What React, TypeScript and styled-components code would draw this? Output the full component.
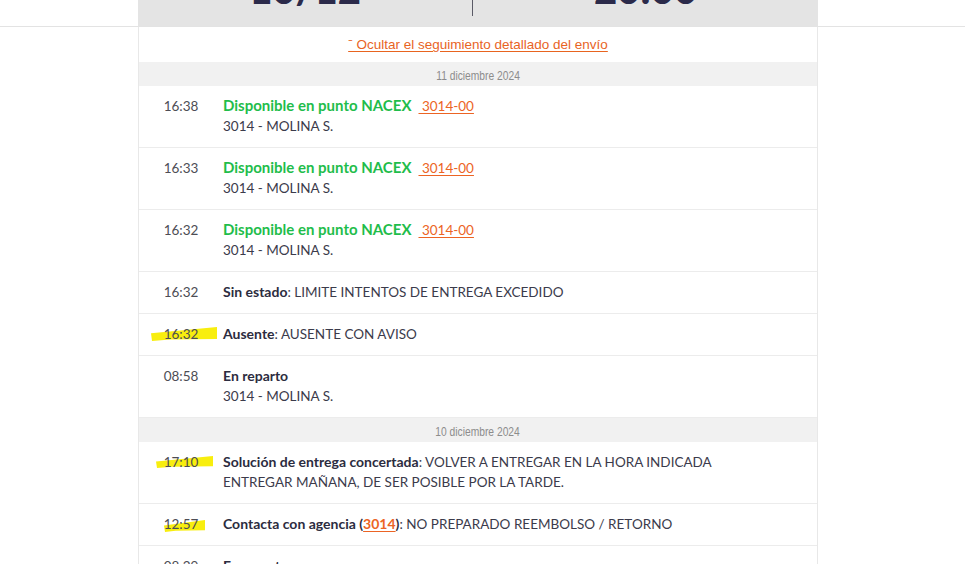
import React from "react";
import styled, { createGlobalStyle } from "styled-components";

const GlobalStyle = createGlobalStyle`
  html, body { margin: 0; padding: 0; background: #ffffff; overflow: hidden; }
  body { font-family: Lato, "Noto Sans", sans-serif; -webkit-font-smoothing: antialiased; }
`;

const Page = styled.div`
  margin-top: -40px;
`;

const TopBand = styled.div`
  border-bottom: 1px solid #e3e3e3;
  padding-right: 9px;
`;

const Summary = styled.div`
  width: 680px;
  margin: 0 auto;
  background: #e4e4e4;
  display: grid;
  grid-template-columns: 334px 1fr;
  padding-bottom: 10px;
`;

const SummaryCell = styled.div<{ $divider?: boolean }>`
  height: 56px;
  box-sizing: border-box;
  padding-top: 9px;
  text-align: center;
  border-left: ${(p) => (p.$divider ? "1px solid #5a5a66" : "none")};
  font-size: 40px;
  line-height: 40px;
  font-weight: 900;
  color: #2b2a4a;
`;

const Main = styled.div`
  padding-right: 9px;
`;

const Track = styled.div`
  width: 680px;
  margin: 0 auto;
  box-sizing: border-box;
  border-left: 1px solid #e8e8e8;
  border-right: 1px solid #e8e8e8;
`;

const ToggleRow = styled.div`
  height: 35px;
  box-sizing: border-box;
  padding-top: 6px;
  text-align: center;
  line-height: 20px;
`;

const ToggleLink = styled.a`
  font-family: "Liberation Sans", Arial, sans-serif;
  font-size: 13.5px;
  color: #e8641f;
  text-decoration: underline;
  text-underline-offset: 2px;
`;

const DateBar = styled.div`
  height: 24px;
  line-height: 24px;
  background: #f1f1f1;
  text-align: center;
`;

const DateText = styled.span`
  display: inline-block;
  font-family: "Liberation Sans", Arial, sans-serif;
  font-size: 13.5px;
  color: #8c8c8c;
  transform: scaleX(0.76);
`;

const Row = styled.div`
  display: flex;
  border-bottom: 1px solid #ececec;
  padding: 10px 0 11px;
`;

const Time = styled.div`
  position: relative;
  width: 84px;
  flex: none;
  text-align: center;
  font-size: 13.5px;
  line-height: 20px;
  color: #4d4d55;
`;

const TimeText = styled.span`
  position: relative;
  z-index: 1;
`;

const Mark = styled.svg<{ $left: number; $top: number }>`
  position: absolute;
  left: ${(p) => p.$left}px;
  top: ${(p) => p.$top}px;
  z-index: 0;
  overflow: visible;
`;

const Body = styled.div`
  flex: 1;
  padding-right: 16px;
  font-size: 13.5px;
  line-height: 20px;
  color: #3b3b4b;
`;

const Title = styled.div`
  height: 20px;
`;

const GreenTitle = styled.span`
  font-size: 15px;
  line-height: 1;
  font-weight: 700;
  color: #1fbd4b;
`;

const Label = styled.span`
  font-size: 14px;
  line-height: 1;
  font-weight: 700;
  color: #2c2c40;
`;

const CodeLink = styled.a<{ $bold?: boolean; $gap?: boolean }>`
  color: #ec6424;
  line-height: 1;
  margin-left: ${(p) => (p.$gap ? "7px" : "0")};
  text-decoration: underline;
  text-underline-offset: 2px;
  font-weight: ${(p) => (p.$bold ? 700 : 400)};
`;

const Sub = styled.div`
  height: 20px;
`;

type Highlight = { left: number; top: number; w: number; h: number };

const HighlightMark = ({ left, top, w, h }: Highlight) => (
  <Mark $left={left} $top={top} width={w} height={h} viewBox={`0 0 ${w} ${h}`}>
    <path
      d={`M1 ${h * 0.45} L${w} 0 L${w} ${h * 0.85} L${w * 0.3} ${h * 0.9} L2 ${h} Z`}
      fill="#f8ee0e"
    />
  </Mark>
);

type Event = {
  time: string;
  hl?: Highlight;
  content: React.ReactNode;
};

const nacex = (
  <>
    <Title>
      <GreenTitle>Disponible en punto NACEX</GreenTitle>
      <CodeLink $gap>&nbsp;3014-00</CodeLink>
    </Title>
    <Sub>3014 - MOLINA S.</Sub>
  </>
);

const day1: Event[] = [
  { time: "16:38", content: nacex },
  { time: "16:33", content: nacex },
  { time: "16:32", content: nacex },
  {
    time: "16:32",
    content: (
      <Title>
        <Label>Sin estado</Label>: LIMITE INTENTOS DE ENTREGA EXCEDIDO
      </Title>
    ),
  },
  {
    time: "16:32",
    hl: { left: 11, top: 3, w: 67, h: 14 },
    content: (
      <Title>
        <Label>Ausente</Label>: AUSENTE CON AVISO
      </Title>
    ),
  },
  {
    time: "08:58",
    content: (
      <>
        <Title>
          <Label>En reparto</Label>
        </Title>
        <Sub>3014 - MOLINA S.</Sub>
      </>
    ),
  },
];

const day2: Event[] = [
  {
    time: "17:10",
    hl: { left: 16, top: 4, w: 58, h: 12 },
    content: (
      <>
        <Title>
          <Label>Solución de entrega concertada</Label>: VOLVER A ENTREGAR EN LA HORA INDICADA
        </Title>
        <Sub>ENTREGAR MAÑANA, DE SER POSIBLE POR LA TARDE.</Sub>
      </>
    ),
  },
  {
    time: "12:57",
    hl: { left: 24, top: 6, w: 42, h: 12 },
    content: (
      <Title>
        <Label>
          Contacta con agencia (<CodeLink $bold>3014</CodeLink>)
        </Label>
        : NO PREPARADO REEMBOLSO / RETORNO
      </Title>
    ),
  },
  {
    time: "08:29",
    content: (
      <>
        <Title>
          <Label>En reparto</Label>
        </Title>
        <Sub>3014 - MOLINA S.</Sub>
      </>
    ),
  },
];

const EventRow = ({ ev }: { ev: Event }) => (
  <Row>
    <Time>
      {ev.hl && <HighlightMark {...ev.hl} />}
      <TimeText>{ev.time}</TimeText>
    </Time>
    <Body>{ev.content}</Body>
  </Row>
);

export default function App() {
  return (
    <Page>
      <GlobalStyle />
      <TopBand>
        <Summary>
          <SummaryCell>10/12</SummaryCell>
          <SummaryCell $divider>20:00</SummaryCell>
        </Summary>
      </TopBand>
      <Main>
        <Track>
          <ToggleRow>
            <ToggleLink>ˉ Ocultar el seguimiento detallado del envío</ToggleLink>
          </ToggleRow>
          <DateBar>
            <DateText>11 diciembre 2024</DateText>
          </DateBar>
          {day1.map((ev, i) => (
            <EventRow key={`a${i}`} ev={ev} />
          ))}
          <DateBar>
            <DateText>10 diciembre 2024</DateText>
          </DateBar>
          {day2.map((ev, i) => (
            <EventRow key={`b${i}`} ev={ev} />
          ))}
        </Track>
      </Main>
    </Page>
  );
}
